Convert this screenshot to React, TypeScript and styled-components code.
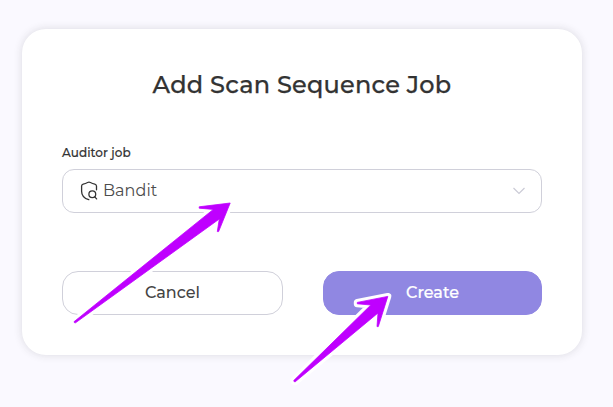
import React from "react";
import styled, { createGlobalStyle } from "styled-components";

const GlobalStyle = createGlobalStyle`
  *, *::before, *::after { box-sizing: border-box; }
  body { margin: 0; background: #faf9ff; overflow: hidden; }
  button { appearance: none; margin: 0; padding: 0; }
`;

const Page = styled.main`
  position: relative;
  width: 613px;
  height: 407px;
  padding: 29px 31px 0 22px;
  background: #faf9ff;
  font-family: Montserrat, Inter, "Open Sans", sans-serif;
  color: #333;
`;

const Dialog = styled.section`
  display: flex;
  flex-direction: column;
  width: 560px;
  height: 326px;
  padding: 40px;
  border-radius: 24px;
  background: #fff;
  box-shadow: 0 0 8px rgba(40, 40, 50, 0.15);
`;

const Title = styled.h1`
  margin: 0;
  height: 32px;
  line-height: 32px;
  font-size: 24px;
  font-weight: 500;
  letter-spacing: 0.22px;
  -webkit-text-stroke: 0.25px #333;
  text-align: center;
  white-space: nowrap;
`;

const Label = styled.label`
  margin-top: 44px;
  height: 16px;
  line-height: 16px;
  font-size: 12px;
  font-weight: 500;
  letter-spacing: 0.06px;
  -webkit-text-stroke: 0.15px #333;
`;

const Select = styled.div`
  display: flex;
  align-items: center;
  flex: none;
  height: 44px;
  margin-top: 8px;
  padding: 0 15px 0 17px;
  border: 1px solid #d0d0da;
  border-radius: 12px;
`;

const Value = styled.span`
  flex: 1;
  margin-left: 5px;
  padding-bottom: 2px;
  font-size: 16px;
  font-weight: 400;
  letter-spacing: 0.06px;
  color: #4c4c4c;
`;

const Actions = styled.div`
  display: grid;
  grid-template-columns: 221px 219px;
  column-gap: 40px;
  margin-top: 58px;
`;

const Button = styled.button<{ $primary?: boolean }>`
  height: 44px;
  padding-bottom: 2px;
  border: 1px solid ${(p) => (p.$primary ? "#9087e2" : "#d0d0da")};
  border-radius: 16px;
  background: ${(p) => (p.$primary ? "#9087e2" : "#fff")};
  color: ${(p) => (p.$primary ? "#fff" : "#444")};
  font-family: inherit;
  font-size: 16px;
  font-weight: 500;
  -webkit-text-stroke: ${(p) => (p.$primary ? "0.2px #fff" : "0")};
`;

const Annotations = styled.svg`
  position: absolute;
  inset: 0;
  pointer-events: none;
`;

const ShieldSearchIcon = () => (
  <svg width="18" height="20" viewBox="80 181 18 20" fill="none" stroke="#333" strokeWidth="1.3" strokeLinecap="round" strokeLinejoin="round">
    <path d="M96.5 189.8V186Q96.4 184.5 94.8 184.1Q92.5 183.6 90.4 182.5Q89 181.9 87.6 182.5Q85.5 183.6 83.2 184.1Q81.6 184.5 81.6 186V191.2C81.6 195.7 84.8 198.5 88.8 199.7" />
    <circle cx="92.3" cy="194.3" r="3.4" />
    <path d="M94.8 196.9L96.6 198.9" />
  </svg>
);

const Chevron = () => (
  <svg width="14" height="10" viewBox="0 0 14 10" fill="none" stroke="#cbcbd6" strokeWidth="1.2">
    <path d="M1.5 2L7 7.5L12.5 2" />
  </svg>
);

const arrows = [
  "M230.2 203L199.2 206.8V208.2L213.3 209.4L74 321.7Q74 323 75.5 322.8L219.3 219L217.3 231.6H218.6Z",
  "M387.8 296.4L357.3 302.4V303.8L370.8 305L293.7 380.6Q293.8 382 295.2 381.8L378 313L377 326.6H378.3Z",
];

export default function App() {
  return (
    <>
      <GlobalStyle />
      <Page>
        <Dialog>
          <Title>Add Scan Sequence Job</Title>
          <Label>Auditor job</Label>
          <Select>
            <ShieldSearchIcon />
            <Value>Bandit</Value>
            <Chevron />
          </Select>
          <Actions>
            <Button>Cancel</Button>
            <Button $primary>Create</Button>
          </Actions>
        </Dialog>
        <Annotations width="613" height="407" viewBox="0 0 613 407">
          {arrows.map((d) => (
            <path key={d} d={d} fill="#fff" stroke="#fff" strokeWidth="7" strokeLinejoin="round" />
          ))}
          {arrows.map((d) => (
            <path key={d} d={d} fill="#bf00ff" stroke="#bf00ff" strokeWidth="0.8" strokeLinejoin="round" />
          ))}
        </Annotations>
      </Page>
    </>
  );
}
